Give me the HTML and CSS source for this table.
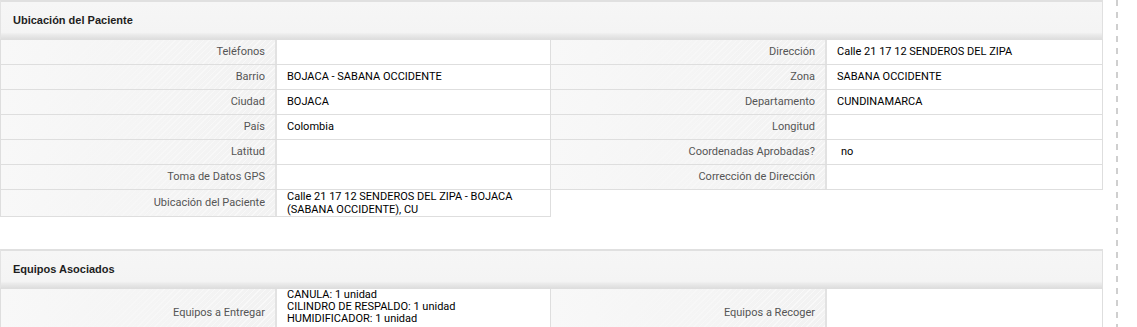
FILE: index.html
```html
<!DOCTYPE html>
<html lang="es">
<head>
<meta charset="utf-8">
<title>Ubicación del Paciente</title>
<link rel="stylesheet" href="styles.css">
</head>
<body>
<div class="page">
  <div class="main">
    <section class="panel">
      <div class="panel-head">Ubicación del Paciente</div>
      <div class="panel-body">
        <div class="half half-left">
          <div class="row"><div class="label">Teléfonos</div><div class="value"></div></div>
          <div class="row"><div class="label">Barrio</div><div class="value">BOJACA - SABANA OCCIDENTE</div></div>
          <div class="row"><div class="label">Ciudad</div><div class="value">BOJACA</div></div>
          <div class="row"><div class="label">País</div><div class="value">Colombia</div></div>
          <div class="row"><div class="label">Latitud</div><div class="value"></div></div>
          <div class="row"><div class="label">Toma de Datos GPS</div><div class="value"></div></div>
          <div class="row"><div class="label">Ubicación del Paciente</div><div class="value value-multi">Calle 21 17 12 SENDEROS DEL ZIPA - BOJACA (SABANA OCCIDENTE), CU</div></div>
        </div>
        <div class="half half-right">
          <div class="row"><div class="label">Dirección</div><div class="value">Calle 21 17 12 SENDEROS DEL ZIPA</div></div>
          <div class="row"><div class="label">Zona</div><div class="value">SABANA OCCIDENTE</div></div>
          <div class="row"><div class="label">Departamento</div><div class="value">CUNDINAMARCA</div></div>
          <div class="row"><div class="label">Longitud</div><div class="value"></div></div>
          <div class="row"><div class="label">Coordenadas Aprobadas?</div><div class="value"><span class="flag">no</span></div></div>
          <div class="row"><div class="label">Corrección de Dirección</div><div class="value"></div></div>
        </div>
      </div>
    </section>

    <section class="panel panel-next">
      <div class="panel-head">Equipos Asociados</div>
      <div class="panel-body">
        <div class="half half-left">
          <div class="row"><div class="label">Equipos a Entregar</div><div class="value value-list">CANULA: 1 unidad<br>CILINDRO DE RESPALDO: 1 unidad<br>HUMIDIFICADOR: 1 unidad</div></div>
        </div>
        <div class="half half-right">
          <div class="row"><div class="label">Equipos a Recoger</div><div class="value value-list"></div></div>
        </div>
      </div>
    </section>
  </div>
  <div class="dash"></div>
</div>
</body>
</html>
```

FILE: styles.css
```css
html, body {
  margin: 0;
  padding: 0;
  background: #ffffff;
}

body {
  font-family: "Liberation Sans", Arial, sans-serif;
  font-size: 11px;
  color: #000;
}

.page {
  display: flex;
  min-height: 100vh;
}

.main {
  width: 1103px;
  flex: none;
}

.dash {
  width: 2px;
  margin-left: 13px;
  flex: none;
  background: repeating-linear-gradient(to bottom, #cfcfcf 0, #cfcfcf 6px, transparent 6px, transparent 12px);
}

.panel-next {
  margin-top: 32px;
}

.panel-head {
  height: 37px;
  line-height: 37px;
  border-top: 2px solid #e0e0e0;
  border-left: 1px solid #e3e3e3;
  border-right: 1px solid #e0e0e0;
  padding-left: 12px;
  font-weight: bold;
  color: #1e1e1e;
  background: linear-gradient(to bottom, #f6f6f6 0%, #f4f4f4 82%, #ebebeb 88%, #dedede 100%);
}

.panel-body {
  display: flex;
  align-items: flex-start;
}

.half {
  display: flex;
  flex-direction: column;
  border-bottom: 1px solid #dedede;
  border-right: 1px solid #dedede;
}

.half-left {
  width: 549px;
  border-left: 1px solid #dedede;
}

.half-right {
  width: 551px;
}

.row {
  display: flex;
  border-top: 1px solid #dedede;
  min-height: 24px;
}

.label {
  width: 264px;
  flex: none;
  padding-right: 10px;
  padding-bottom: 1px;
  border-right: 2px solid #e2e2e2;
  display: flex;
  align-items: center;
  justify-content: flex-end;
  font-family: Roboto, "Liberation Sans", Arial, sans-serif;
  color: #555;
  background:
    linear-gradient(to right, rgba(248,248,248,1) 0%, rgba(246,246,246,0.9) 35%, rgba(242,242,242,0) 100%),
    repeating-linear-gradient(135deg, #f2f2f2 0, #f2f2f2 3px, #f9f9f9 3px, #f9f9f9 4px);
}

.value {
  flex: 1;
  padding-left: 10px;
  padding-bottom: 1px;
  display: flex;
  align-items: center;
  font-family: Roboto, "Liberation Sans", Arial, sans-serif;
  color: #000;
  background: #fff;
}

.value-multi {
  line-height: 13px;
  min-height: 26px;
  padding-bottom: 0;
  padding-right: 10px;
}

.value-list {
  display: block;
  line-height: 12px;
  height: 48px;
  padding-bottom: 0;
}

.flag {
  padding-left: 4px;
}
```
